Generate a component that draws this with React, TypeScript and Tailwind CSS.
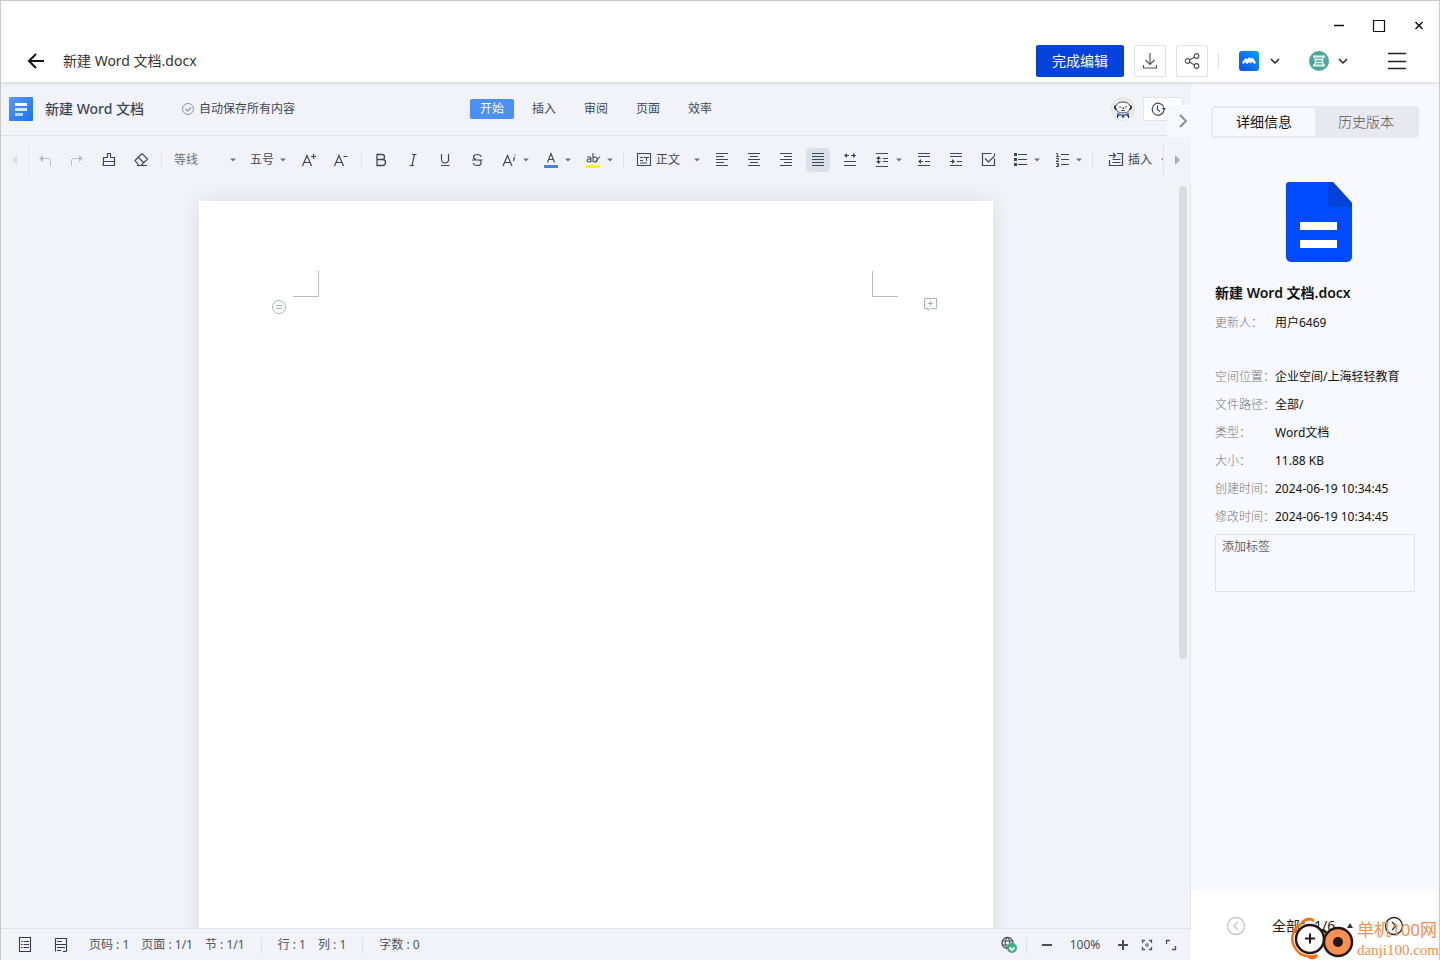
import React, { useState } from "react";
import clsx from "clsx";

const tabs = ["开始", "插入", "审阅", "页面", "效率"];

const details = [
  { label: "空间位置：", value: "企业空间/上海轻轻教育" },
  { label: "文件路径：", value: "全部/" },
  { label: "类型：", value: "Word文档" },
  { label: "大小：", value: "11.88 KB" },
  { label: "创建时间：", value: "2024-06-19 10:34:45" },
  { label: "修改时间：", value: "2024-06-19 10:34:45" },
];

type IconProps = {
  children: React.ReactNode;
  size?: number;
  className?: string;
};

const Icon = ({ children, size = 16, className }: IconProps) => (
  <svg
    width={size}
    height={size}
    viewBox={`0 0 ${size} ${size}`}
    fill="none"
    stroke="currentColor"
    strokeWidth="1"
    className={clsx("shrink-0", className)}
    aria-hidden="true"
  >
    {children}
  </svg>
);

const Caret = ({ className }: { className?: string }) => (
  <svg width="8" height="4" viewBox="0 0 8 4" className={clsx("shrink-0", className)} aria-hidden="true">
    <path d="M1 0.5h6L4 3.5z" fill="#6b7280" />
  </svg>
);

const Chevron = () => (
  <Icon size={12}>
    <path d="M2 4l4 4 4-4" stroke="#222" strokeWidth="1.5" />
  </Icon>
);

type ToolProps = {
  label: string;
  children: React.ReactNode;
  active?: boolean;
  disabled?: boolean;
};

const Tool = ({ label, children, active, disabled }: ToolProps) => (
  <button
    type="button"
    aria-label={label}
    disabled={disabled}
    className={clsx(
      "mx-1 flex size-6 shrink-0 items-center justify-center rounded-sm",
      active && "bg-[#dae0e7]",
      disabled && "text-[#b9bfc9]",
    )}
  >
    {children}
  </button>
);

const MenuTool = ({ label, children }: ToolProps) => (
  <button
    type="button"
    aria-label={label}
    className="flex h-6 w-[42px] shrink-0 items-center justify-between pl-2 pr-[5px]"
  >
    {children}
    <Caret />
  </button>
);

const Divider = () => (
  <span className="flex w-2 shrink-0 justify-center">
    <span className="h-4 w-px bg-[#dde1ea]" />
  </span>
);

type PickerProps = {
  label: string;
  value: string;
  className: string;
  icon?: React.ReactNode;
};

const Picker = ({ label, value, className, icon }: PickerProps) => (
  <label className={clsx("relative flex h-6 shrink-0 items-center gap-1 pl-[9px]", className)}>
    {icon}
    <select aria-label={label} className="h-6 min-w-0 flex-1 appearance-none bg-transparent text-xs outline-none">
      <option>{value}</option>
    </select>
    <Caret className="pointer-events-none absolute right-1 top-2.5" />
  </label>
);

const Toolbar = () => (
  <div className="flex h-12 shrink-0 items-center text-[#3d4757]">
    <button type="button" aria-label="向左滚动" className="flex h-8 w-7 shrink-0 items-center justify-center border-r border-[#ebedf2] text-[#dadee6]">
      <Icon size={12}>
        <path d="M8 1v10L3 6z" fill="currentColor" stroke="none" />
      </Icon>
    </button>
    <div className="flex min-w-0 flex-1 items-center overflow-hidden">
      <Tool label="撤销" disabled>
        <Icon>
          <path d="M3 6.5h8.5a2 2 0 0 1 2 2V14" />
          <path d="M6 3v7L2 6.5z" fill="currentColor" stroke="none" />
        </Icon>
      </Tool>
      <Tool label="重做" disabled>
        <Icon>
          <path d="M13 6.5H4.500a2 2 0 0 0-2 2V14" />
          <path d="M10 3v7l4-3.500z" fill="currentColor" stroke="none" />
        </Icon>
      </Tool>
      <Tool label="格式刷">
        <Icon>
          <path d="M6.500 5.500V1.500h3v4h4v4M2.500 9.500v-4h4M2.500 9.500h11v4H1.500c1 0 1-2 1-4" strokeWidth="1.200" />
        </Icon>
      </Tool>
      <Tool label="清除格式">
        <Icon>
          <path d="M2 8.500L9 1.500l5.500 5.500-6.500 6.500H6zM5.500 5.500l5.500 5.500M4 13.500h10" strokeWidth="1.200" />
        </Icon>
      </Tool>
      <Divider />
      <Picker label="字体" value="等线" className="w-[76px] text-[#6b7380]" />
      <Picker label="字号" value="五号" className="mr-0.5 w-[50px]" />
      <Tool label="增大字号">
        <Icon>
          <path d="M1.500 14L6 3.500 10.500 14M3 10.500h6M10 4.500h5M12.500 2v5" strokeWidth="1.200" />
        </Icon>
      </Tool>
      <Tool label="减小字号">
        <Icon>
          <path d="M1.500 14L6 3.500 10.500 14M3 10.500h6M10.500 4.500h4" strokeWidth="1.200" />
        </Icon>
      </Tool>
      <Divider />
      <Tool label="加粗">
        <Icon>
          <path d="M4 2.500h5a2.500 2.500 0 0 1 0 5H4zM4 7.500h5.500a3 3 0 0 1 0 6H4z" strokeWidth="1.300" />
        </Icon>
      </Tool>
      <Tool label="斜体">
        <Icon>
          <path d="M7 2.500h4.500M4.500 13.500H9M9.500 2.500l-2.500 11" strokeWidth="1.200" />
        </Icon>
      </Tool>
      <Tool label="下划线">
        <Icon>
          <path d="M4.500 2v5.500a3.500 3.500 0 0 0 7 0V2M4 13.500h8.500" strokeWidth="1.200" />
        </Icon>
      </Tool>
      <Tool label="删除线">
        <Icon>
          <path d="M12 5c0-1.500-1.500-2.500-3.700-2.500S4.500 3.500 4.500 5.200c0 1.300 1 2 2.500 2.300M3 8h10.500M10.500 8.500c1.200.4 1.700 1.100 1.700 2.200 0 1.800-1.600 2.800-3.900 2.800S4.300 12.500 4.300 11" strokeWidth="1.200" />
        </Icon>
      </Tool>
      <MenuTool label="文字效果">
        <Icon>
          <path d="M2 14L6.500 3.500 11 14M3.500 10.500h6M13.500 5l-1 4M14 2.500v1" strokeWidth="1.200" />
        </Icon>
      </MenuTool>
      <MenuTool label="字体颜色">
        <Icon>
          <path d="M4.500 10.500L8 1.500l3.500 9M5.700 7.500h4.600" strokeWidth="1.100" />
          <path d="M1 13h14v3H1z" fill="#3c82f6" stroke="none" />
        </Icon>
      </MenuTool>
      <MenuTool label="突出显示">
        <Icon>
          <path d="M2 5h2.500c1 0 1.500.5 1.500 1.500V10M6 7H3.700a1.500 1.500 0 0 0 0 3C5 10 6 9.300 6 8.500M8 1v9M8 6c.5-.8 1.200-1 2-1 1.500 0 2.200 1 2.200 2.500S11.500 10 10 10c-.8 0-1.500-.3-2-1M10.500 9.500L15 4.500" strokeWidth="1.100" />
          <path d="M1 13h14v3H1z" fill="#fffb00" stroke="none" />
        </Icon>
      </MenuTool>
      <Divider />
      <Picker
        label="样式"
        value="正文"
        className="mr-px w-[78px]"
        icon={
          <Icon>
            <path d="M1.500 1.500h13v12h-13zM4 5.500h3M4 8.500h3M4 11h7M8 5.500h5M10.500 5.500V9" strokeWidth="1.100" />
          </Icon>
        }
      />
      <Tool label="左对齐">
        <Icon>
          <path d="M2 1.500h12M2 4.500h8M2 7.500h12M2 10.500h8M2 13.500h12" />
        </Icon>
      </Tool>
      <Tool label="居中">
        <Icon>
          <path d="M2 1.500h12M4 4.500h8M2 7.500h12M4 10.500h8M2 13.500h12" />
        </Icon>
      </Tool>
      <Tool label="右对齐">
        <Icon>
          <path d="M2 1.500h12M6 4.500h8M2 7.500h12M6 10.500h8M2 13.500h12" />
        </Icon>
      </Tool>
      <Tool label="两端对齐" active>
        <Icon>
          <path d="M2 1.500h12M2 4.500h12M2 7.500h12M2 10.500h12M2 13.500h12" />
        </Icon>
      </Tool>
      <Tool label="分散对齐">
        <Icon>
          <path d="M3 3.500h4M9 3.500h4M2 9.500h12M2 13.500h12" />
          <path d="M5 1v5L2 3.500zM11 1v5l3-2.500z" fill="currentColor" stroke="none" />
        </Icon>
      </Tool>
      <MenuTool label="行距">
        <Icon>
          <path d="M2 1.500h12M9 6.500h5M9 9.500h5M2 14.500h12M4.500 5v6" />
          <path d="M2 7h5L4.500 4zM2 9h5l-2.500 3z" fill="currentColor" stroke="none" />
        </Icon>
      </MenuTool>
      <Tool label="减少缩进">
        <Icon>
          <path d="M2 1.500h12M2 4.500h12M4 9.500h3M9 9.500h5M2 13.500h12" />
          <path d="M5 7v5L2 9.500z" fill="currentColor" stroke="none" />
        </Icon>
      </Tool>
      <Tool label="增加缩进">
        <Icon>
          <path d="M2 1.500h12M2 4.500h12M2 9.500h3M9 9.500h5M2 13.500h12" />
          <path d="M4 7v5l3-2.500z" fill="currentColor" stroke="none" />
        </Icon>
      </Tool>
      <Tool label="待办">
        <Icon>
          <path d="M11.500 1.500h-9v12h12v-7M14.500 1.500v2M5 6.500l3.500 3.500 6-6" strokeWidth="1.200" />
        </Icon>
      </Tool>
      <MenuTool label="项目符号">
        <Icon>
          <path d="M6 2.500h9M6 7.500h9M6 12.500h9" strokeWidth="1.200" />
          <path d="M2 1h3v3H2zM2 6h3v3H2zM2 11h3v3H2z" fill="currentColor" stroke="none" />
        </Icon>
      </MenuTool>
      <MenuTool label="编号">
        <Icon>
          <path d="M7 2.500h8M7 7.500h8M7 12.500h8" strokeWidth="1.200" />
          <path d="M2 1.500h1.500v3M2 4.500h3M2 6.500h2.500v1L2 9.500h3M2 11.500h2.500v3H2M3 13h1.500" />
        </Icon>
      </MenuTool>
      <Divider />
      <button type="button" className="flex h-6 shrink-0 items-center gap-1 pl-3 text-xs">
        <Icon>
          <path d="M9 1.500h5.500v12h-13V8M4.500 7.500h8M4.500 10.500h8M1 3.500h6M5 1l2.500 2.500L5 6" strokeWidth="1.200" />
        </Icon>
        插入
        <Caret className="ml-1" />
      </button>
    </div>
    <button type="button" aria-label="向右滚动" className="flex h-8 w-7 shrink-0 items-center justify-center border-l border-[#e0e2e8] text-[#a5adba]">
      <Icon size={12}>
        <path d="M3 1v10l5-5z" fill="currentColor" stroke="none" />
      </Icon>
    </button>
  </div>
);

const StatusBar = () => (
  <footer className="flex h-8 shrink-0 items-center justify-between border-t border-[#dfe4ee] pl-4 pr-2 text-xs text-[#4c5563]">
    <div className="flex items-center">
      <button type="button" aria-label="目录" className="mr-5">
        <Icon>
          <path d="M2.500 .5h11v14h-11zM4 4.500h1.500M6.500 4.500H12M4 7.500h1.500M6.500 7.500H12M4 10.500h1.500M6.500 10.500H12" stroke="#333d4d" strokeWidth="1.100" />
        </Icon>
      </button>
      <button type="button" aria-label="页面视图" className="mr-5">
        <Icon>
          <path d="M2.500 1v13.500M13.500 1v13.500M2.500 1.500h11M2.500 7.500h11M4 4.500h5M4 10.500h8M4 13.500h4M10 14.500h3.500" stroke="#333d4d" strokeWidth="1.100" />
        </Icon>
      </button>
      <span className="mr-3">页码 : 1</span>
      <span className="mr-3">页面 : 1/1</span>
      <span>节 : 1/1</span>
      <span className="mx-4 h-4 w-px bg-[#dde1ea]" />
      <span className="mr-3">行 : 1</span>
      <span>列 : 1</span>
      <span className="mx-4 h-4 w-px bg-[#dde1ea]" />
      <span>字数 : 0</span>
    </div>
    <div className="flex items-center text-[#4a4f58]">
      <button type="button" aria-label="网络状态">
        <Icon size={18}>
          <circle cx="7.500" cy="7" r="5.500" stroke="#3d4757" strokeWidth="1.300" />
          <path d="M2 5h11M2 9h11M7.500 1.500c-3 3-3 8 0 11M7.500 1.500c3 3 3 8 0 11" stroke="#3d4757" />
          <circle cx="12" cy="12" r="5" fill="#36b37e" stroke="none" />
          <path d="M9.500 11.500l2.500 2.500 2.500-2.500" stroke="#fff" strokeWidth="2" />
        </Icon>
      </button>
      <span className="ml-2 mr-3 h-4 w-px bg-[#dde1ea]" />
      <button type="button" aria-label="缩小">
        <Icon>
          <path d="M3 8h10" strokeWidth="2" />
        </Icon>
      </button>
      <span className="w-[60px] text-center">100%</span>
      <button type="button" aria-label="放大" className="mr-2">
        <Icon>
          <path d="M3 8h10M8 3v10" strokeWidth="2" />
        </Icon>
      </button>
      <button type="button" aria-label="适应页面" className="mr-2">
        <Icon>
          <path d="M3.500 6V3.500H6M10 3.500h2.500V6M12.500 10v2.500H10M6 12.500H3.500V10" strokeWidth="1.300" />
          <circle cx="8" cy="8" r="2" fill="#8993a4" stroke="none" />
        </Icon>
      </button>
      <button type="button" aria-label="全屏" className="mr-1">
        <Icon>
          <path d="M3.500 7V3.500H7M12.500 9v3.500H9" strokeWidth="1.300" />
        </Icon>
      </button>
    </div>
  </footer>
);

const Editor = () => {
  const [activeTab, setActiveTab] = useState("开始");

  return (
    <main className="relative flex min-w-0 flex-1 flex-col bg-[#f2f3f8]">
      <div className="flex h-[54px] shrink-0 items-center border-b border-[#e1e4eb] px-2 text-[#3d4757]">
        <div className="flex flex-1 items-center">
          <svg width="24" height="24" viewBox="0 0 24 24" aria-hidden="true">
            <defs>
              <linearGradient id="doc" x1="0" y1="0" x2="1" y2="1">
                <stop stopColor="#5a98fa" />
                <stop offset="1" stopColor="#1473f5" />
              </linearGradient>
            </defs>
            <rect width="24" height="24" rx="1" fill="url(#doc)" />
            <path d="M6 6h12v3H6z" fill="#fff" />
            <path d="M6 11h12v3H6z" fill="#d9e7fe" />
            <path d="M6 16h8v3H6z" fill="#b9d4fd" />
          </svg>
          <h1 className="ml-3 text-sm font-medium">新建 Word 文档</h1>
          <p className="ml-9 flex items-center gap-[3px] text-xs">
            <Icon>
              <circle cx="8" cy="8" r="5.500" stroke="#8993a4" />
              <path d="M5.500 8l2 2 3.500-3.500" stroke="#8993a4" strokeWidth="1.200" />
            </Icon>
            自动保存所有内容
          </p>
        </div>
        <nav className="flex gap-2 text-xs">
          {tabs.map((tab) => (
            <button
              key={tab}
              type="button"
              onClick={() => setActiveTab(tab)}
              className={clsx("h-5 w-11 rounded-xs", tab === activeTab && "bg-[#4a90f5] text-white")}
            >
              {tab}
            </button>
          ))}
        </nav>
        <div className="flex flex-1 items-center justify-end gap-2">
          <svg width="24" height="24" viewBox="0 0 24 24" aria-hidden="true">
            <circle cx="12" cy="12" r="11.500" fill="#ebebeb" stroke="#e2e2e5" />
            <path d="M6 16l6-1 6 1 .5 5a11 11 0 0 1-13 0z" fill="#fff" />
            <path d="M5.500 8.500C6 6 9 5 12 5s6 1 6.500 3.500c1.500.5 1.500 2.500.5 3-.5 3-3.500 4.500-7 4.500s-6.500-1.500-7-4.500c-1-.5-1-2.500.5-3z" fill="#fff" stroke="#444" />
            <path d="M4.500 8.500c-1 1-1 3 .5 4M19.500 8.500c1 1 1 3-.5 4" stroke="#222" strokeWidth="1.500" fill="none" />
            <path d="M8 10h2.500M13.500 10H16" stroke="#aaa" strokeWidth="2" />
            <path d="M11.500 10.500h1.500v1.500h-1.500z" fill="#333" />
            <path d="M10 13.500h4" stroke="#555" />
            <path d="M6 15.500l3.500 2L7 20zM18 15.500l-3.500 2L17 20zM12 16.500l1.500 3-1.500 2-1.500-2z" fill="#1d4fb5" />
            <path d="M6.500 18v3M17.500 18v3M9.500 17l1 2M14.500 17l-1 2" stroke="#222" />
          </svg>
          <button type="button" aria-label="历史记录" className="flex h-6 w-10 items-center rounded-xs border border-[#e0e3eb] bg-white pl-1.5">
            <Icon>
              <path d="M13.900 6.500a6 6 0 1 0 0 3.500M7.500 4.500v4l2.500 2" strokeWidth="1.200" />
              <path d="M12 7h4l-2 3z" fill="currentColor" stroke="none" />
            </Icon>
          </button>
        </div>
      </div>
      <Toolbar />
      <div className="relative min-h-0 flex-1 overflow-hidden border-r border-[#e1e4ee]">
        <article className="mx-auto mt-[17px] flex h-full w-[794px] items-start bg-white pl-[73px] pr-[55px] pt-[70px] text-[#a9b1c0] shadow-[0_0_20px_rgba(60,64,80,0.13)]">
          <button type="button" aria-label="段落菜单" className="mr-[7px] mt-[29px]">
            <Icon size={14}>
              <circle cx="7" cy="7" r="6.500" />
              <path d="M4 5.500h6M4 8.500h6" />
            </Icon>
          </button>
          <span className="size-[26px] border-b border-r border-[#bbb]" />
          <span className="ml-auto mr-[26px] size-[26px] border-b border-l border-[#bbb]" />
          <button type="button" aria-label="添加批注" className="mt-[26px]">
            <Icon size={14}>
              <path d="M.5 1.500h12v10H6.500L4 13.500v-2H.5zM4 6.500h5M6.500 4v5" />
            </Icon>
          </button>
        </article>
        <div className="absolute right-[3px] top-0.5 h-[473px] w-2 rounded-full bg-[#dcdcdd]" />
      </div>
      <StatusBar />
      <button type="button" aria-label="收起侧栏" className="absolute right-0 top-[23px] flex h-8 w-6 items-center justify-end bg-[#f8f9fe]">
        <Icon>
          <path d="M5 2l6 6-6 6" stroke="#8f8f91" strokeWidth="2" />
        </Icon>
      </button>
    </main>
  );
};

const Watermark = () => (
  <div className="pointer-events-none absolute bottom-0 right-0 flex items-end text-[#fb8c4e]">
    <svg width="64" height="44" viewBox="0 0 64 44" fill="none" aria-hidden="true">
      <path d="M23 5C18 1 13 4 10 8 2 13-1 22 3 30c3 6 8 10 14 10 3 3 7 3 9-1" stroke="#f8700f" strokeWidth="2.500" />
      <path d="M9 7c4-5 11-7 14-3-5 0-8 1-14 3zM14 39c5 1 8 0 12-1-1 5-7 7-12 1z" fill="#f8700f" />
      <circle cx="19" cy="23" r="14" fill="#fff" stroke="#231815" strokeWidth="2.500" />
      <path d="M14 22.500h10M19 17.500v10" stroke="#231815" strokeWidth="2" />
      <circle cx="47" cy="26" r="14" fill="#fb9150" stroke="#231815" strokeWidth="2.500" />
      <circle cx="47" cy="26" r="5" fill="#231815" />
      <path d="M29 14c3 0 5 0 6 3" stroke="#231815" strokeWidth="2.500" />
    </svg>
    <p className="flex flex-col pl-0.5">
      <span className="text-[17px] leading-5">单机100网</span>
      <span className="font-['Liberation_Serif',serif] text-[15px] leading-5">danji100.com</span>
    </p>
  </div>
);

const DetailsPanel = () => (
  <aside className="flex w-[248px] shrink-0 flex-col">
    <div className="flex-1 bg-[#f8f9fe] px-5 pt-6 text-xs">
      <div className="flex h-8 rounded-sm border-2 border-[#e8e9ee] bg-[#e8e9ee] text-sm">
        <button type="button" className="flex-1 bg-[#f8f9fe] text-[#111]">
          详细信息
        </button>
        <button type="button" className="flex-1 font-light text-[#555]">
          历史版本
        </button>
      </div>
      <div className="px-1">
        <div className="flex justify-center pb-[17px] pl-2 pt-11">
          <svg width="66" height="80" viewBox="0 0 66 80" aria-hidden="true">
            <path d="M3 0h44l19 21v54a5 5 0 0 1-5 5H5a5 5 0 0 1-5-5V3a3 3 0 0 1 3-3z" fill="#004bff" />
            <path d="M42 0h5l19 21v4H45a3 3 0 0 1-3-3z" fill="#0443d9" />
            <path d="M14 40h37v8H14zM14 58h37v8H14z" fill="#fff" />
          </svg>
        </div>
        <h2 className="h-[30px] text-sm leading-7 font-semibold text-[#111]">新建 Word 文档.docx</h2>
        <dl className="leading-7">
          <div className="mb-[26px] flex">
            <dt className="w-[60px] font-light text-[#777]">更新人：</dt>
            <dd className="text-[#111]">用户6469</dd>
          </div>
          {details.map(({ label, value }) => (
            <div key={label} className="flex">
              <dt className="w-[60px] font-light text-[#777]">{label}</dt>
              <dd className="whitespace-nowrap text-[#111]">{value}</dd>
            </div>
          ))}
        </dl>
        <textarea
          aria-label="添加标签"
          placeholder="添加标签"
          className="mt-[3px] block h-[58px] w-full resize-none rounded-xs border border-[#dfe1e8] bg-transparent px-1.5 py-1 leading-4 placeholder:text-[#666]"
        />
      </div>
    </div>
    <div className="relative flex h-[69px] items-center px-[35px] text-sm text-[#222]">
      <button type="button" aria-label="上一个" className="text-[#c4c4c4]">
        <Icon size={20}>
          <circle cx="10" cy="10" r="8.500" strokeWidth="1.300" />
          <path d="M12 6l-4 4 4 4" strokeWidth="1.300" />
        </Icon>
      </button>
      <button type="button" className="ml-[26px] flex items-center gap-3 whitespace-nowrap">
        全部：1/6
        <svg width="6" height="5" viewBox="0 0 6 5" aria-hidden="true">
          <path d="M3 0l3 5H0z" fill="#333" />
        </svg>
      </button>
      <button type="button" aria-label="下一个" className="ml-auto">
        <Icon size={20}>
          <circle cx="10" cy="10" r="8.500" strokeWidth="1.300" />
          <path d="M8 6l4 4-4 4" strokeWidth="1.300" />
        </Icon>
      </button>
      <Watermark />
    </div>
  </aside>
);

const Header = () => (
  <header className="relative z-10 shrink-0 bg-white pb-px shadow-[0_1px_4px_rgba(0,0,0,0.15)]">
    <div className="flex h-10 justify-end pt-2 text-[#111]">
      <button type="button" aria-label="最小化" className="flex w-10 items-center justify-center">
        <Icon>
          <path d="M3 8.500h10" strokeWidth="1.500" />
        </Icon>
      </button>
      <button type="button" aria-label="最大化" className="flex w-10 items-center justify-center">
        <Icon>
          <path d="M2.500 3.500h11v11h-11z" strokeWidth="1.200" />
        </Icon>
      </button>
      <button type="button" aria-label="关闭" className="flex w-10 items-center justify-center">
        <Icon>
          <path d="M4.500 5l7 7M11.500 5l-7 7" strokeWidth="1.500" />
        </Icon>
      </button>
    </div>
    <div className="flex h-10 items-center pl-6 pr-8">
      <button type="button" aria-label="返回" className="mr-[18px]">
        <Icon size={20}>
          <path d="M19 10H4M11 3l-7 7 7 7" stroke="#111" strokeWidth="2" />
        </Icon>
      </button>
      <span className="text-sm text-[#333]">新建 Word 文档.docx</span>
      <div className="ml-auto flex items-center">
        <button type="button" className="h-8 w-[88px] rounded-xs bg-[#0443d9] text-sm text-white">
          完成编辑
        </button>
        <button type="button" aria-label="下载" className="ml-2.5 flex size-8 items-center justify-center rounded-xs border border-[#dfe1e8] text-[#555]">
          <Icon>
            <path d="M8 0v11M3.500 7L8 11.500 12.500 7M1.500 12v3h13v-3" strokeWidth="1.200" />
          </Icon>
        </button>
        <button type="button" aria-label="分享" className="ml-2.5 flex size-8 items-center justify-center rounded-xs border border-[#dfe1e8] text-[#555]">
          <Icon>
            <circle cx="3.500" cy="8" r="2.300" strokeWidth="1.200" />
            <circle cx="12.500" cy="3" r="2.300" strokeWidth="1.200" />
            <circle cx="12.500" cy="13" r="2.300" strokeWidth="1.200" />
            <path d="M5.500 7l5-3M5.500 9l5 3" strokeWidth="1.200" />
          </Icon>
        </button>
        <span className="mx-2.5 h-4 w-px bg-[#dfe1e8]" />
        <button type="button" aria-label="应用" className="ml-2.5 flex items-center gap-2.5">
          <svg width="20" height="20" viewBox="0 0 20 20" aria-hidden="true">
            <defs>
              <linearGradient id="app" x1="1" y1="0" x2="0" y2="1">
                <stop stopColor="#0c9dff" />
                <stop offset="1" stopColor="#0650f5" />
              </linearGradient>
            </defs>
            <rect width="20" height="20" rx="3" fill="url(#app)" />
            <path d="M4.500 11.500L7 8.500M8 11.500l2.500-4M11.500 11l1.500-3 2.500 3.500" stroke="#fff" strokeWidth="2.500" strokeLinecap="round" strokeLinejoin="round" fill="none" />
          </svg>
          <Chevron />
        </button>
        <button type="button" aria-label="账户" className="ml-7 flex items-center gap-2">
          <svg width="20" height="20" viewBox="0 0 20 20" aria-hidden="true">
            <circle cx="10" cy="10" r="10" fill="#4ba89d" />
            <path d="M4 5.500h12M4 14.500h12" stroke="#e5f5f2" strokeWidth="1.800" />
            <path d="M5 5.500c2 2.500 2 6.500 0 9M15 5.500c-2 2.500-2 6.500 0 9M6.500 8.500h7M6.500 11.500h7" stroke="#e5f5f2" strokeWidth="1.300" fill="none" />
          </svg>
          <Chevron />
        </button>
        <button type="button" aria-label="菜单" className="ml-[38px]">
          <Icon size={20}>
            <path d="M1 2.500h18M1 10.500h18M1 17.500h18" stroke="#222" strokeWidth="1.300" />
          </Icon>
        </button>
      </div>
    </div>
  </header>
);

export default function App() {
  return (
    <div className="flex h-screen flex-col overflow-hidden border-x border-t border-[#c9c9c9] bg-white font-['Noto_Sans','Noto_Sans_CJK_SC',sans-serif]">
      <Header />
      <div className="flex min-h-0 flex-1">
        <Editor />
        <DetailsPanel />
      </div>
    </div>
  );
}
